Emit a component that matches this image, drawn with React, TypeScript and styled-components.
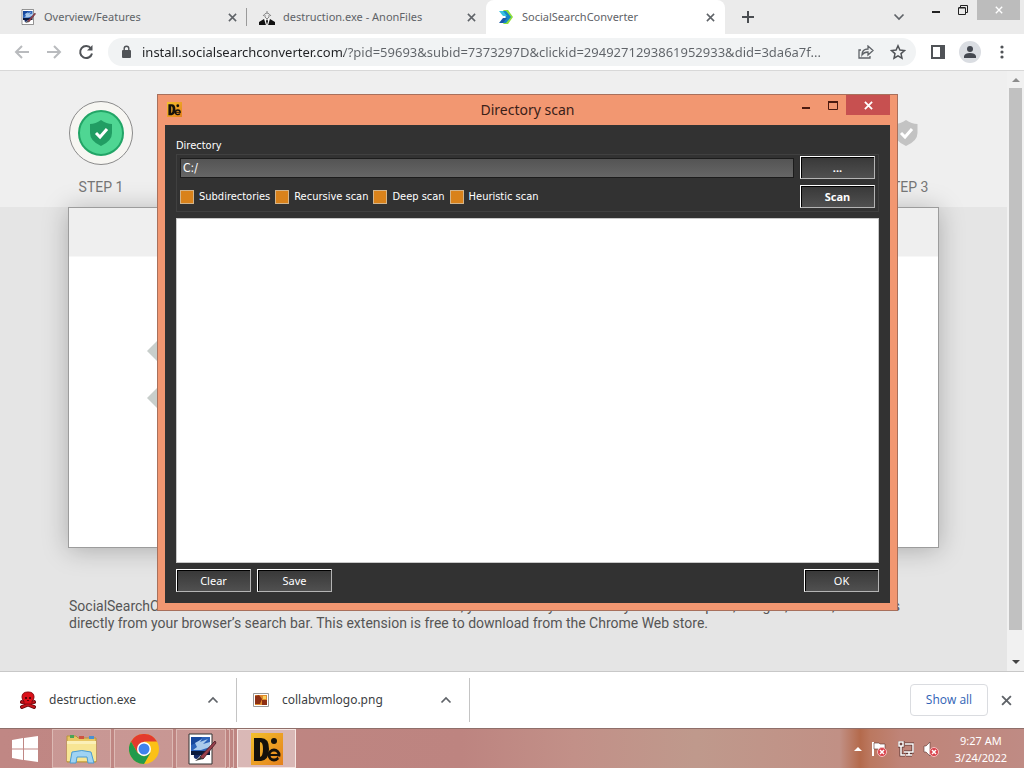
import React from "react";
import styled, { createGlobalStyle } from "styled-components";

const ui = `"Open Sans", "Noto Sans", sans-serif`;
const wide = `"Noto Sans", "Open Sans", sans-serif`;
const tahoma = `"DejaVu Sans Condensed", "Noto Sans", sans-serif`;

const Global = createGlobalStyle`
  * { box-sizing: border-box; }
  body { margin: 0; }
  button { padding: 0; border: 0; background: none; color: inherit; font: inherit; }
  svg { display: block; flex: none; }
`;

const Desktop = styled.div`
  display: flex;
  flex-direction: column;
  min-height: 100vh;
  background: #fff;
  font: 11px/16px ${wide};
  color: #5f6368;
`;

/* ---------- browser ---------- */
const TabStrip = styled.header`
  display: flex;
  height: 34px;
  padding-left: 8px;
  background: #ebebeb;
`;
const Tab = styled.div<{ $active?: boolean; $divider?: boolean }>`
  display: flex;
  align-items: center;
  gap: 8px;
  flex: 0 1 239px;
  min-width: 0;
  padding: 0 7px 0 12px;
  border-radius: 8px 8px 0 0;
  background: ${(p) => (p.$active ? "#fff" : "transparent")};
  box-shadow: ${(p) => (p.$active ? "0 8px 0 #fff" : "none")};
  background-image: ${(p) => (p.$divider ? "linear-gradient(#9a9a9a, #9a9a9a)" : "none")};
  background-size: 1px 18px;
  background-position: right 8px;
  background-repeat: no-repeat;
`;
const TabTitle = styled.span`
  flex: 1;
  overflow: hidden;
  white-space: nowrap;
`;
const IconButton = styled.button<{ $w?: number }>`
  display: flex;
  align-items: center;
  justify-content: center;
  width: ${(p) => p.$w ?? 16}px;
  flex: none;
`;
const Spacer = styled.div`
  flex: 1;
`;
const WindowControls = styled.div`
  display: flex;
  align-items: center;
  height: 20px;
  margin-right: 4px;
`;
const CloseChrome = styled(IconButton)`
  height: 20px;
  background: #bcbcbc;
`;
const Toolbar = styled.nav`
  display: flex;
  align-items: center;
  height: 37px;
  padding: 0 6px;
  border-bottom: 1px solid #d8d8d8;
  background: #fff;
`;
const Omnibox = styled.label`
  display: flex;
  align-items: center;
  flex: 1;
  min-width: 0;
  height: 28px;
  margin: 0 6px;
  padding: 0 2px 0 12px;
  border-radius: 14px;
  background: #f1f3f4;
`;
const Url = styled.input`
  flex: 1;
  min-width: 0;
  margin-left: 8px;
  padding: 0;
  border: 0;
  outline: 0;
  font: 13px/20px ${wide};
  color: #5f6368;
  background: linear-gradient(90deg, #202124 202px, #5f6368 202px);
  background-clip: text;
  -webkit-text-fill-color: transparent;
`;

/* ---------- web page ---------- */
const Viewport = styled.main`
  position: relative;
  display: flex;
  flex: 1;
  background: #e5e5e5;
`;
const Page = styled.div`
  flex: 1;
  font: 14px/17px Roboto, sans-serif;
  color: #555;
`;
const StepBand = styled.section`
  padding: 30px 68px 11px;
  background: #efefef;
`;
const Steps = styled.div`
  display: flex;
  justify-content: space-between;
`;
const Step = styled.div`
  display: flex;
  flex-direction: column;
  align-items: center;
  gap: 14px;
  width: 66px;
  color: #757575;
`;
const Body = styled.section`
  padding: 0 68px;
`;
const Card = styled.div`
  height: 341px;
  border: 1px solid #9c9c9c;
  background: linear-gradient(#efefef 48px, #fff 49px);
  box-shadow: 0 2px 24px rgba(0, 0, 0, 0.25);
`;
const Markers = styled.div`
  display: flex;
  flex-direction: column;
  gap: 25px;
  padding: 132px 0 0 78px;
`;
const Blurb = styled.p`
  margin: 0;
  padding: 50px 1px 0;
`;
const Scrollbar = styled.div`
  display: flex;
  flex-direction: column;
  align-items: center;
  width: 17px;
  padding: 6px 0;
  background: #f1f1f1;
`;
const Thumb = styled.div`
  flex: 1;
  width: 13px;
  margin: 6px 0 30px;
  background: #c1c1c1;
`;

/* ---------- dialog ---------- */
const Dialog = styled.section`
  position: absolute;
  inset: 23px 126px 60px 157px;
  display: flex;
  flex-direction: column;
  padding: 0 7px 7px;
  border: 1px solid #a8705c;
  background: #f29771;
`;
const TitleBar = styled.header`
  display: grid;
  grid-template-columns: 1fr auto 1fr;
  height: 30px;
  color: #3a2018;
`;
const TitleIcon = styled.div`
  padding: 7px 2px;
`;
const Title = styled.h1`
  margin: 0;
  font: 14px/30px ${wide};
`;
const DialogControls = styled.div`
  display: flex;
  justify-content: flex-end;
  height: 20px;
`;
const CloseRed = styled(IconButton)`
  background: #c75050;
`;
const Client = styled.div`
  display: flex;
  flex-direction: column;
  flex: 1;
  padding: 13px 11px 11px;
  background: #323232;
  font: 11px/16px ${tahoma};
  color: #fff;
`;
const ScanGroup = styled.div`
  display: flex;
  flex-direction: column;
  gap: 6px;
  margin-bottom: 6px;
  padding: 1px 3px 3px;
  border: 1px solid #404040;
`;
const Row = styled.div`
  display: flex;
  align-items: center;
  gap: 6px;
`;
const PathInput = styled.input`
  flex: 1;
  min-width: 0;
  height: 20px;
  padding: 1px 2px 0;
  border: 1px solid #1c1c1c;
  background: linear-gradient(#545454, #666);
  font: 12px/16px ${tahoma};
  color: #fff;
`;
const DarkButton = styled.button<{ $bold?: boolean }>`
  width: 75px;
  height: 23px;
  border: 1px solid;
  border-color: #fff #b4b4b4 #b4b4b4 #fff;
  background: linear-gradient(#383838, #505050);
  box-shadow: inset 1px 1px 0 #000;
  font: ${(p) => (p.$bold ? "bold" : "normal")} 11px/16px ${wide};
  color: #fff;
`;
const Options = styled.div`
  display: flex;
  flex: 1;
  gap: 5px;
`;
const Option = styled.label`
  display: flex;
  align-items: center;
  gap: 5px;
  white-space: nowrap;
`;
const Tick = styled.input`
  appearance: none;
  width: 14px;
  height: 14px;
  margin: 0;
  border: 1px solid #d2b48c;
  background: #d9821b;
`;
const Results = styled.div`
  flex: 1;
  margin-bottom: 6px;
  border: 1px solid #c8c8c8;
  background: #fff;
`;

/* ---------- downloads ---------- */
const Downloads = styled.footer`
  display: flex;
  align-items: center;
  height: 57px;
  padding-right: 10px;
  border-top: 1px solid #c8c8c8;
  background: #fff;
`;
const DownloadItem = styled.div`
  display: flex;
  align-items: center;
  gap: 13px;
  width: 233px;
  height: 44px;
  padding: 0 15px 0 16px;
  border-right: 1px solid #c4c4c4;
  font: 12px/16px ${wide};
  color: #3c4043;

  &:first-child { width: 237px; padding-left: 20px; }
`;
const ShowAll = styled.button`
  width: 78px;
  height: 32px;
  margin-right: 10px;
  border: 1px solid #dadce0;
  border-radius: 4px;
  font: 500 12px/16px ${ui};
  color: #2f62b5;
`;

/* ---------- taskbar ---------- */
const Taskbar = styled.footer`
  display: flex;
  gap: 3px;
  height: 40px;
  padding-right: 17px;
  border-top: 1px solid #8f6f6a;
  background: linear-gradient(90deg, #c08784 0%, #bd8480 45%, #c29088 56%, #bf998c 68%, #c19085 82%, #b46a4c 84%, #bb7860 85%, #bf8478 88%, #bf8b84 100%);
`;
const Task = styled.button<{ $active?: boolean; $stack?: boolean }>`
  display: flex;
  align-items: center;
  justify-content: center;
  width: ${(p) => (p.$stack ? 50 : 59)}px;
  border: 1px solid ${(p) => (p.$active ? "#f6e6e2" : "#dcb9b4")};
  background: ${(p) => (p.$active ? "rgba(255,255,255,.42)" : "rgba(255,255,255,.14)")};
`;
const TaskStack = styled.div`
  display: flex;
  gap: 1px;
  width: 58px;
`;
const StackEdge = styled.span`
  width: 3px;
  border: solid #dcb9b4;
  border-width: 1px 1px 1px 0;
`;
const Tray = styled.div`
  display: flex;
  align-items: center;
  gap: 9px;
  color: #fff;
`;
const Clock = styled.div`
  margin-left: 7px;
  font: 11px/17px ${wide};
  text-align: center;
`;

/* ---------- icons ---------- */
const Cross = ({ s = 9, w = 1.7, c = "#5f6368" }) => (
  <svg width={s} height={s} viewBox="0 0 10 10" stroke={c} strokeWidth={w}>
    <path d="M1 1l8 8M9 1L1 9" />
  </svg>
);
const PaintIcon = ({ s }: { s: number }) => (
  <svg width={s} height={s} viewBox="0 0 32 32">
    <path d="M4 1h23v30H4z" fill="#fff" stroke="#333" />
    <path d="M6 4h19v14H6z" fill="#2b62b8" />
    <path d="M6 4h11q-2 5-11 8z" fill="#16479c" />
    <path d="M10 10l7-4-2 3 8-3-5 5 7-2v5l-9 3H8l4-3z" fill="#a9caec" />
    <path d="M6 18h19v4H6z" fill="#0b1a3c" />
    <path d="M9 22h7l-4 4q-4 0-3-4z" fill="#162c66" />
    <path d="M15 24L30 8l1 2-13 16z" fill="#9b3f4c" stroke="#57262e" />
    <path d="M10 28l5-4 3 2z" fill="#333" />
  </svg>
);
const AnonIcon = () => (
  <svg width="16" height="16" viewBox="0 0 16 16">
    <path d="M0 16v-3l5-3 2 6zM16 16v-3l-5-3-2 6z" fill="#111" />
    <path d="M6 10h4l-1 6H7z" fill="#fff" />
    <path d="M8 10l1 2-1 4-1-4z" fill="#111" />
    <path d="M4 7q4-6 8 0M6 6v2l2 2 2-2V6M8 2v2" fill="none" stroke="#888" />
  </svg>
);
const ConverterIcon = () => (
  <svg width="16" height="16" viewBox="0 0 16 16">
    <path d="M5 1h5l5 7-5 7H5l5-7z" fill="#8ddf3c" />
    <path d="M3 2h5l5 6-5 6H3l5-6z" fill="#1786c8" />
    <path d="M1 2h4l4 5H5z" fill="#35c2e0" />
    <path d="M1 14h4l4-5H5z" fill="#1b58a8" />
  </svg>
);
const Shield = ({ c, w }: { c: string; w: number }) => (
  <g transform={`translate(${32 - w / 2} 19)`}>
    <path d={`M${w / 2} 0Q${w * 0.75} 4 ${w} 4V13Q${w} 21 ${w / 2} 26Q0 21 0 13V4Q${w * 0.25} 4 ${w / 2} 0z`} fill={c} />
    <path d={`M${w / 2 - 5} 13l4 4 7-8`} fill="none" stroke="#fff" strokeWidth="3" />
  </g>
);
const DieLogo = ({ s }: { s: number }) => (
  <svg width={s} height={s} viewBox="0 0 32 32" aria-label="Detect It Easy">
    <defs>
      <linearGradient id="die" x1="0" y1="0" x2="1" y2="1">
        <stop offset="0" stopColor="#f4c02c" />
        <stop offset="1" stopColor="#e4801c" />
      </linearGradient>
    </defs>
    <path d="M0 0h32v32H0z" fill="url(#die)" />
    <path fillRule="evenodd" d="M3 5h7q8 0 8 11t-8 12H3zM9 9v15q3-1 3-8t-3-7z" fill="#15110b" />
    <circle cx="23" cy="22" r="5" fill="none" stroke="#15110b" strokeWidth="3" />
    <path d="M19 22h9" stroke="#15110b" strokeWidth="2" />
    <path d="M26 23l4 1-2 2z" fill="#e4841d" />
    <circle cx="23" cy="8" r="3" fill="#15110b" />
  </svg>
);
const SkullIcon = () => (
  <svg width="16" height="18" viewBox="0 0 16 18">
    <path d="M2 11l12 5M14 11L2 16" stroke="#6a0a0e" strokeWidth="4" strokeLinecap="round" />
    <path d="M2 11l12 5M14 11L2 16" stroke="#c4141b" strokeWidth="2" strokeLinecap="round" />
    <path d="M8 1q6 0 6 5 0 3-2 4v3H4v-3Q2 9 2 6q0-5 6-5z" fill="#dc1019" stroke="#8a0a10" />
    <path d="M5 6h2v2H5zM9 6h2v2H9zM7 9h2v1H7z" fill="#5a0508" />
  </svg>
);
const PictureIcon = () => (
  <svg width="16" height="14" viewBox="0 0 16 14">
    <path d="M.5.5h15v13H.5z" fill="#fff" stroke="#999" />
    <path d="M2 2h12v10H2z" fill="#e08a2c" />
    <path d="M2 3l4-1 3 4-2 5H2zM9 7h5v5H9z" fill="#8c2f14" />
    <path d="M10 3h3v3h-3z" fill="#f5cf60" />
  </svg>
);
const Chevron = ({ up }: { up?: boolean }) => (
  <svg width="12" height="8" viewBox="0 0 12 8" fill="none" stroke="#5f6368" strokeWidth="1.700">
    <path d={up ? "M1.500 6.500L6 2l4.500 4.500" : "M1.500 1.500L6 6l4.500-4.500"} />
  </svg>
);
const ExplorerIcon = () => (
  <svg width="34" height="30" viewBox="0 0 34 30">
    <path d="M2 4V2h9l2 2h18v24H2z" fill="#e8c765" stroke="#b8943a" />
    <path d="M5 1h4v3H5z" fill="#49a357" />
    <path d="M14 2h5v3h-5z" fill="#cf5340" />
    <path d="M24 2h5v3h-5z" fill="#4a8fd0" />
    <path d="M2 7h29v20H2z" fill="#f7e594" />
    <path d="M2 7h29v3H2z" fill="#fbf0b8" />
    <path d="M5 29l2-11q10-3 19 0l3 11h-6l-1-6H12l-1 6z" fill="#9fd3f3" stroke="#4a9bd1" />
  </svg>
);
const ChromeIcon = () => (
  <svg width="30" height="30" viewBox="0 0 30 30">
    <circle cx="15" cy="15" r="15" fill="#fbc116" />
    <path d="M2 7.5A15 15 0 0 1 28 7.5H15L8.5 18.7z" fill="#e33b2e" />
    <path d="M2 7.5L8.5 18.7 15 22.5 21.5 18.7 15 30A15 15 0 0 1 2 7.5z" fill="#229a4b" />
    <circle cx="15" cy="15" r="7" fill="#fff" />
    <circle cx="15" cy="15" r="5.5" fill="#3f82ec" />
  </svg>
);
const RedBadge = () => (
  <>
    <circle cx="11" cy="11" r="4.5" fill="#d9424b" stroke="#f5c0c0" />
    <path d="M9 9l4 4M13 9l-4 4" stroke="#fff" strokeWidth="1.5" />
  </>
);
const Diamond = () => (
  <svg width="22" height="22" viewBox="0 0 22 22">
    <path d="M0 11L11 0l11 11-11 11z" fill="#c8cecb" />
  </svg>
);

export default function App() {
  return (
    <Desktop>
      <Global />
      <TabStrip>
        <Tab $divider>
          <PaintIcon s={16} />
          <TabTitle>Overview/Features</TabTitle>
          <IconButton aria-label="Close tab"><Cross /></IconButton>
        </Tab>
        <Tab>
          <AnonIcon />
          <TabTitle>destruction.exe - AnonFiles</TabTitle>
          <IconButton aria-label="Close tab"><Cross /></IconButton>
        </Tab>
        <Tab $active>
          <ConverterIcon />
          <TabTitle>SocialSearchConverter</TabTitle>
          <IconButton aria-label="Close tab"><Cross /></IconButton>
        </Tab>
        <IconButton $w={46} aria-label="New tab">
          <svg width="12" height="12" viewBox="0 0 12 12" stroke="#4a4d51" strokeWidth="2"><path d="M6 0v12M0 6h12" /></svg>
        </IconButton>
        <Spacer />
        <IconButton $w={48} aria-label="Search tabs"><Chevron /></IconButton>
        <WindowControls>
          <IconButton $w={26} aria-label="Minimize">
            <svg width="8" height="12" viewBox="0 0 8 12"><path d="M0 7h8v2H0z" fill="#222" /></svg>
          </IconButton>
          <IconButton $w={28} aria-label="Restore">
            <svg width="10" height="10" viewBox="0 0 10 10" fill="none" stroke="#222"><path d="M.5 3h7v6.500h-7zM.5 2.500h7M2.500 2V.5h7v7H8" /></svg>
          </IconButton>
          <CloseChrome $w={43} aria-label="Close"><Cross s={8} c="#fff" /></CloseChrome>
        </WindowControls>
      </TabStrip>

      <Toolbar>
        <IconButton $w={32} aria-label="Back">
          <svg width="16" height="14" viewBox="0 0 16 14" fill="none" stroke="#b9bbbe" strokeWidth="2"><path d="M15 7H2M8 1L2 7l6 6" /></svg>
        </IconButton>
        <IconButton $w={32} aria-label="Forward">
          <svg width="16" height="14" viewBox="0 0 16 14" fill="none" stroke="#b9bbbe" strokeWidth="2"><path d="M1 7h13M8 1l6 6-6 6" /></svg>
        </IconButton>
        <IconButton $w={32} aria-label="Reload">
          <svg width="16" height="16" viewBox="0 0 16 16" fill="none" stroke="#505357" strokeWidth="2"><path d="M13 4.500A6 6 0 1 0 14 9.500" /><path d="M14.500 1v5.500H9z" fill="#505357" stroke="none" /></svg>
        </IconButton>
        <Omnibox>
          <svg width="14" height="14" viewBox="0 0 14 14"><path d="M3 5h7q1 0 1 1v6q0 1-1 1H3q-1 0-1-1V6q0-1 1-1z" fill="#505357" /><path d="M4.200 6V3.500a2.300 2.300 0 0 1 4.600 0V6" fill="none" stroke="#505357" strokeWidth="1.400" /></svg>
          <Url aria-label="Address" readOnly value="install.socialsearchconverter.com/?pid=59693&subid=7373297D&clickid=2949271293861952933&did=3da6a7f..." />
          <IconButton $w={32} aria-label="Share">
            <svg width="16" height="14" viewBox="0 0 16 14" fill="none" stroke="#5f6368" strokeWidth="1.300"><path d="M3 5H1v8h11v-2" /><path d="M4 10q0-6 6-6V1l5 4.500-5 4.500V7Q6 7 4 10z" /></svg>
          </IconButton>
          <IconButton $w={32} aria-label="Bookmark">
            <svg width="16" height="16" viewBox="0 0 16 16" fill="none" stroke="#505357" strokeWidth="1.500"><path d="M8 1.800l1.900 4.300 4.600.4-3.500 3.100 1 4.600L8 11.800l-4 2.400 1-4.600L1.500 6.500l4.600-.4z" /></svg>
          </IconButton>
        </Omnibox>
        <IconButton $w={32} aria-label="Side panel">
          <svg width="14" height="14" viewBox="0 0 14 14"><path d="M1 1h12v12H1z" fill="#fff" stroke="#505357" strokeWidth="2" /><path d="M9 1h4v12H9z" fill="#505357" /></svg>
        </IconButton>
        <IconButton $w={32} aria-label="Profile">
          <svg width="22" height="22" viewBox="0 0 22 22"><circle cx="11" cy="11" r="11" fill="#dadde2" /><circle cx="11" cy="8" r="3" fill="#444850" /><path d="M5 17v-2q1-3 6-3t6 3v2z" fill="#444850" /></svg>
        </IconButton>
        <IconButton $w={32} aria-label="Menu">
          <svg width="4" height="14" viewBox="0 0 4 14" fill="#505357"><circle cx="2" cy="2" r="1.600" /><circle cx="2" cy="7" r="1.600" /><circle cx="2" cy="12" r="1.600" /></svg>
        </IconButton>
      </Toolbar>

      <Viewport>
        <Page>
          <StepBand>
            <Steps>
              <Step>
                <svg width="64" height="64" viewBox="0 0 64 64">
                  <circle cx="32" cy="32" r="31.500" fill="#f7f6f2" stroke="#8a8a8a" />
                  <circle cx="32" cy="32" r="22" fill="#4fd693" stroke="#22a566" strokeWidth="2" />
                  <Shield c="#219d63" w={22} />
                </svg>
                STEP 1
              </Step>
              <Step>
                <svg width="64" height="64" viewBox="0 0 64 64"><Shield c="#c3c3c3" w={23} /></svg>
                STEP 3
              </Step>
            </Steps>
          </StepBand>
          <Body>
            <Card>
              <Markers><Diamond /><Diamond /></Markers>
            </Card>
            <Blurb>
              SocialSearchConverter is a browser extension. Once it is added, you can easily convert any kind of file: pdfs, images, videos, and notes
              directly from your browser’s search bar. This extension is free to download from the Chrome Web store.
            </Blurb>
          </Body>
        </Page>
        <Scrollbar>
          <svg width="8" height="5" viewBox="0 0 8 5"><path d="M0 5l4-4 4 4z" fill="#8c8c8c" /></svg>
          <Thumb />
          <svg width="8" height="5" viewBox="0 0 8 5"><path d="M0 0l4 4 4-4z" fill="#444" /></svg>
        </Scrollbar>

        <Dialog role="dialog" aria-label="Directory scan">
          <TitleBar>
            <TitleIcon><DieLogo s={15} /></TitleIcon>
            <Title>Directory scan</Title>
            <DialogControls>
              <IconButton $w={28} aria-label="Minimize">
                <svg width="8" height="12" viewBox="0 0 8 12"><path d="M0 8h8v2H0z" fill="#4a1a10" /></svg>
              </IconButton>
              <IconButton $w={26} aria-label="Maximize">
                <svg width="10" height="9" viewBox="0 0 10 9"><path d="M.5 1h9v7.500h-9z" fill="none" stroke="#4a1a10" /><path d="M0 0h10v2H0z" fill="#4a1a10" /></svg>
              </IconButton>
              <CloseRed $w={44} aria-label="Close"><Cross s={9} w={2} c="#fff" /></CloseRed>
            </DialogControls>
          </TitleBar>
          <Client>
            <label htmlFor="directory">Directory</label>
            <ScanGroup>
              <Row>
                <PathInput id="directory" defaultValue="C:/" />
                <DarkButton $bold>...</DarkButton>
              </Row>
              <Row>
                <Options>
                  {["Subdirectories", "Recursive scan", "Deep scan", "Heuristic scan"].map((name) => (
                    <Option key={name}><Tick type="checkbox" defaultChecked />{name}</Option>
                  ))}
                </Options>
                <DarkButton $bold>Scan</DarkButton>
              </Row>
            </ScanGroup>
            <Results />
            <Row>
              <DarkButton>Clear</DarkButton>
              <DarkButton>Save</DarkButton>
              <Spacer />
              <DarkButton>OK</DarkButton>
            </Row>
          </Client>
        </Dialog>
      </Viewport>

      <Downloads>
        <DownloadItem>
          <SkullIcon />destruction.exe<Spacer />
          <IconButton aria-label="Download options"><Chevron up /></IconButton>
        </DownloadItem>
        <DownloadItem>
          <PictureIcon />collabvmlogo.png<Spacer />
          <IconButton aria-label="Download options"><Chevron up /></IconButton>
        </DownloadItem>
        <Spacer />
        <ShowAll>Show all</ShowAll>
        <IconButton aria-label="Close downloads"><Cross s={11} /></IconButton>
      </Downloads>

      <Taskbar>
        <IconButton $w={49} aria-label="Start">
          <svg width="28" height="26" viewBox="0 0 28 26" fill="#fff"><path d="M1 4l11-2v10.500H1zM13 2l14-2v12.500H13zM1 13.500h11V24L1 22zM13 13.500h14V26l-14-2z" /></svg>
        </IconButton>
        <Task aria-label="File Explorer"><ExplorerIcon /></Task>
        <Task aria-label="Chrome"><ChromeIcon /></Task>
        <TaskStack>
          <Task $stack aria-label="Paint"><PaintIcon s={32} /></Task>
          <StackEdge />
          <StackEdge />
        </TaskStack>
        <Task $active aria-label="Detect It Easy"><DieLogo s={32} /></Task>
        <Spacer />
        <Tray>
          <svg width="8" height="5" viewBox="0 0 8 5"><path d="M0 5l4-4 4 4z" fill="#fff" /></svg>
          <svg width="18" height="16" viewBox="0 0 18 16"><path d="M2 1v14" stroke="#fff" strokeWidth="2" /><path d="M3 2h5l1 1h5v6H8L7 8H3z" fill="#fff" stroke="#5a3532" strokeWidth=".6" /><RedBadge /></svg>
          <svg width="16" height="16" viewBox="0 0 16 16" fill="none"><g stroke="#5a3532" strokeWidth="3"><path d="M7 3h8v8H6M8 14h6M11 11v3" /><path d="M1 1h4v4H1zM3 5v9h4" /></g><g stroke="#fff" strokeWidth="1.500"><path d="M7 3h8v8H6M8 14h6M11 11v3" /><path d="M1 1h4v4H1zM3 5v9h4" /></g></svg>
          <svg width="16" height="16" viewBox="0 0 16 16"><path d="M1 5h2l4-4v14l-4-4H1z" fill="#fff" stroke="#5a3532" strokeWidth=".6" /><RedBadge /></svg>
          <Clock>9:27 AM<br />3/24/2022</Clock>
        </Tray>
      </Taskbar>
    </Desktop>
  );
}
